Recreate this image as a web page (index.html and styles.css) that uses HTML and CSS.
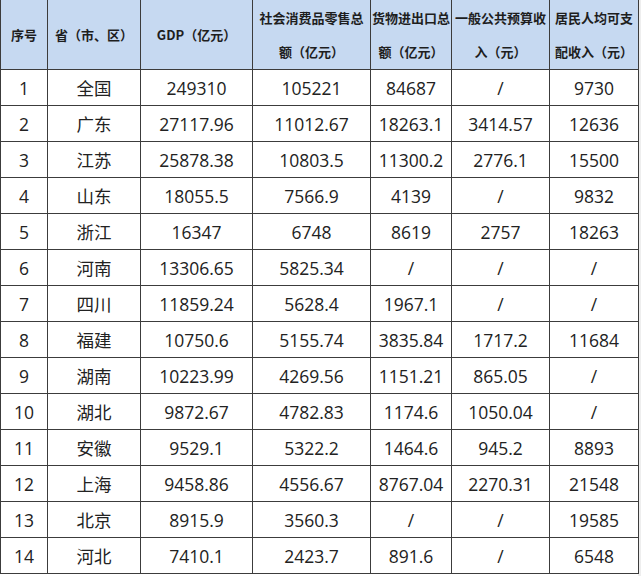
FILE: index.html
```html
<!DOCTYPE html>
<html lang="zh-CN">
<head>
<meta charset="utf-8">
<title>各省GDP数据</title>
<link rel="stylesheet" href="styles.css">
</head>
<body>
<table class="data">
  <colgroup>
    <col class="c1"><col class="c2"><col class="c3"><col class="c4"><col class="c5"><col class="c6"><col class="c7">
  </colgroup>
  <thead>
    <tr>
      <th>序号</th>
      <th>省（市、区）</th>
      <th>GDP（亿元）</th>
      <th>社会消费品零售总<br>额（亿元）</th>
      <th>货物进出口总<br>额（亿元）</th>
      <th>一般公共预算收<br>入（元）</th>
      <th>居民人均可支<br>配收入（元）</th>
    </tr>
  </thead>
  <tbody>
    <tr><td>1</td><td>全国</td><td>249310</td><td>105221</td><td>84687</td><td>/</td><td>9730</td></tr>
    <tr><td>2</td><td>广东</td><td>27117.96</td><td>11012.67</td><td>18263.1</td><td>3414.57</td><td>12636</td></tr>
    <tr><td>3</td><td>江苏</td><td>25878.38</td><td>10803.5</td><td>11300.2</td><td>2776.1</td><td>15500</td></tr>
    <tr><td>4</td><td>山东</td><td>18055.5</td><td>7566.9</td><td>4139</td><td>/</td><td>9832</td></tr>
    <tr><td>5</td><td>浙江</td><td>16347</td><td>6748</td><td>8619</td><td>2757</td><td>18263</td></tr>
    <tr><td>6</td><td>河南</td><td>13306.65</td><td>5825.34</td><td>/</td><td>/</td><td>/</td></tr>
    <tr><td>7</td><td>四川</td><td>11859.24</td><td>5628.4</td><td>1967.1</td><td>/</td><td>/</td></tr>
    <tr><td>8</td><td>福建</td><td>10750.6</td><td>5155.74</td><td>3835.84</td><td>1717.2</td><td>11684</td></tr>
    <tr><td>9</td><td>湖南</td><td>10223.99</td><td>4269.56</td><td>1151.21</td><td>865.05</td><td>/</td></tr>
    <tr><td>10</td><td>湖北</td><td>9872.67</td><td>4782.83</td><td>1174.6</td><td>1050.04</td><td>/</td></tr>
    <tr><td>11</td><td>安徽</td><td>9529.1</td><td>5322.2</td><td>1464.6</td><td>945.2</td><td>8893</td></tr>
    <tr><td>12</td><td>上海</td><td>9458.86</td><td>4556.67</td><td>8767.04</td><td>2270.31</td><td>21548</td></tr>
    <tr><td>13</td><td>北京</td><td>8915.9</td><td>3560.3</td><td>/</td><td>/</td><td>19585</td></tr>
    <tr><td>14</td><td>河北</td><td>7410.1</td><td>2423.7</td><td>891.6</td><td>/</td><td>6548</td></tr>
  </tbody>
</table>
</body>
</html>
```

FILE: styles.css
```css
html, body {
  margin: 0;
  padding: 0;
  background: #ffffff;
}

body {
  width: 641px;
  height: 576px;
  overflow: hidden;
  background: linear-gradient(to right, #ffffff 0, #ffffff 638px, #eeeeee 638px);
}

.data {
  border-collapse: collapse;
  table-layout: fixed;
  width: 638px;
  font-family: "Open Sans", "Noto Sans CJK SC", sans-serif;
  color: #222222;
  background: #ffffff;
}

.c1 { width: 47px; }
.c2 { width: 93px; }
.c3 { width: 112px; }
.c4 { width: 118px; }
.c5 { width: 81px; }
.c6 { width: 98px; }
.c7 { width: 89px; }

.data th,
.data td {
  border: 1px solid #3c3c3c;
  padding: 0;
  text-align: center;
  vertical-align: middle;
  overflow: hidden;
  white-space: nowrap;
}

.data thead th {
  border-top: none;
  height: 68px;
  background: #c6d9f1;
  font-family: "Noto Sans CJK SC", "Open Sans", sans-serif;
  font-weight: 700;
  font-size: 13px;
  line-height: 34px;
  color: #1e1e1e;
  padding-top: 1px;
  box-sizing: border-box;
}

.data thead th:first-child,
.data tbody td:first-child {
  border-left: 1px solid #3c3c3c;
}

.data tbody td {
  height: 35px;
  font-size: 17.5px;
  line-height: 24px;
}
```
